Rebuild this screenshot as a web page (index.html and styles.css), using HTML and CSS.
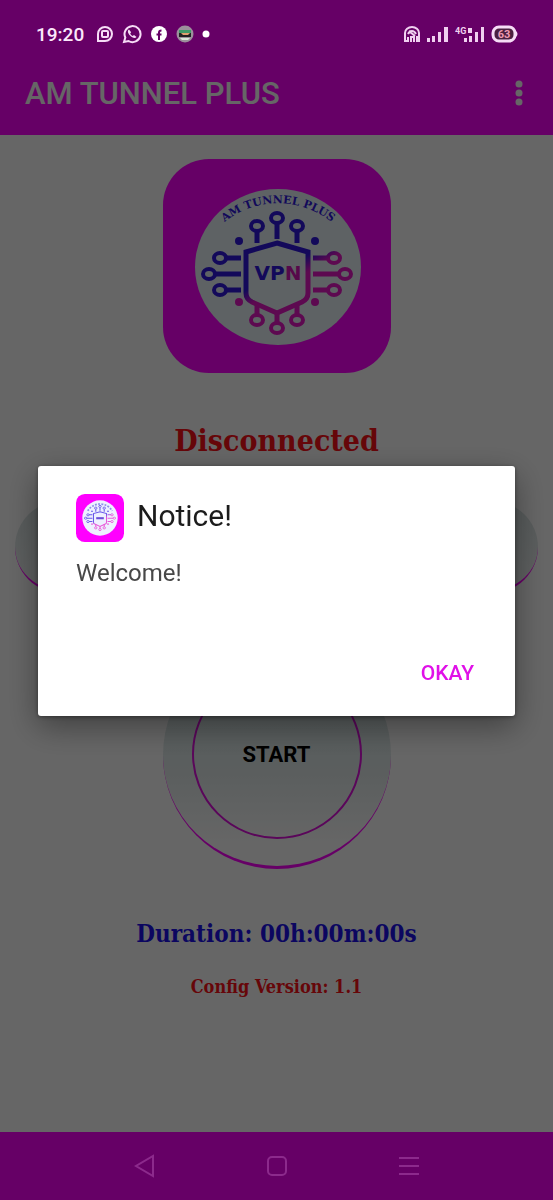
FILE: index.html
```html
<!DOCTYPE html>
<html lang="en">
<head>
  <meta charset="UTF-8">
  <title>AM TUNNEL PLUS</title>
  <meta name="viewport" content="width=device-width, initial-scale=1">
  <link rel="stylesheet" href="styles.css">
</head>
<body>

<!-- Phone status bar -->
<div class="status-bar">
  <span class="time">19:20</span>
  <div class="status-left">
    <svg width="18" height="18" viewBox="0 0 18 18" fill="none" stroke="#f6dcf6" stroke-width="2">
      <path d="M2 16V9a7 7 0 1 1 7 7z"/>
      <rect x="6" y="6" width="6" height="6" rx="1"/>
    </svg>
    <svg width="20" height="20" viewBox="0 0 20 20">
      <path d="M2 18l1.300-4.500A8 8 0 1 1 6.500 17z" fill="none" stroke="#f6dcf6" stroke-width="2"/>
      <path d="M7 5.500c-2 1-1 4 1 6s5 3.500 6.500 1.500l-2.500-2-1.300 1c-1.200-.5-2-1.400-2.500-2.500l1-1.300z" fill="#f6dcf6"/>
    </svg>
    <svg width="18" height="18" viewBox="0 0 18 18">
      <circle cx="9" cy="9" r="8" fill="#fff"/>
      <path d="M9 15V7.500C9 6 10 5.500 11.500 5.500M6.500 9.500h5" fill="none" stroke="#660066" stroke-width="2"/>
    </svg>
    <svg width="18" height="18" viewBox="0 0 18 18">
      <circle cx="9" cy="9" r="8.500" fill="#9c8f9c"/>
      <path d="M3 5h12v3H3z" fill="#3f9a68"/>
      <path d="M3 8h12v4H3z" fill="#222"/>
      <path d="M5 8h9l-2 2H7z" fill="#e0a070"/>
      <path d="M4 13h10l-2 2H6z" fill="#d8e8d8"/>
    </svg>
    <svg width="8" height="18" viewBox="0 0 8 18"><circle cx="4" cy="9" r="3.500" fill="#fff"/></svg>
  </div>
  <div class="status-right">
    <svg width="18" height="18" viewBox="0 0 18 18" fill="none" stroke="#f0d0f0" stroke-width="2">
      <path d="M2 12V8a7 6 0 0 1 14 0v4"/>
      <path d="M5 9c2-4 6-4 8 0M6 6l6 5"/>
      <path d="M2 10v6h3v-4M8 17v-5h3v5M14 17v-5h2v5"/>
    </svg>
    <svg width="22" height="18" viewBox="0 0 22 18" fill="#f0d0f0">
      <path d="M0 13h3v4H0zM5 11h3v6H5zM11 7h3v10h-3zM17 2h4v15h-4z"/>
    </svg>
    <svg width="30" height="18" viewBox="0 0 30 18" fill="#f0d0f0">
      <text x="0" y="9" font-family="Roboto, sans-serif" font-size="9" font-weight="700">4G</text>
      <path d="M9 13h3v4H9zM14 11h3v6h-3zM20 7h3v10h-3zM26 2h3v15h-3zM13 3h4v5h-4z"/>
    </svg>
    <svg width="28" height="18" viewBox="0 0 28 18">
      <rect x="2" y="2" width="22" height="14" rx="6" fill="#4a2040" stroke="#f6dcf6" stroke-width="3"/>
      <path d="M25 6q3 3 0 6z" fill="#f6dcf6"/>
      <text x="13" y="13" text-anchor="middle" font-family="Roboto, sans-serif" font-size="11" font-weight="700" fill="#f09ab0">63</text>
    </svg>
  </div>
</div>

<header>
  <h1>AM TUNNEL PLUS</h1>
  <button class="menu-btn" aria-label="Menu">
    <svg width="12" height="28" viewBox="0 0 12 28" fill="#fff">
      <circle cx="6" cy="4" r="3.500"/><circle cx="6" cy="13" r="3.500"/><circle cx="6" cy="22" r="3.500"/>
    </svg>
  </button>
</header>

<main>
  <svg class="logo" viewBox="0 0 228 214">
    <defs>
      <linearGradient id="ink" gradientUnits="userSpaceOnUse" x1="114" y1="94" x2="138" y2="136">
        <stop offset="0.350" stop-color="#3018e0"/>
        <stop offset="0.650" stop-color="#e818c8"/>
      </linearGradient>
      <path id="arc" d="M55 69A85 85 0 0 1 175 69"/>
      <g id="circuit" fill="none" stroke="url(#ink)" stroke-width="5">
        <path d="M114 84l31 9v41q0 6-6 9l-25 11-25-11q-6-3-6-9V93z"/>
        <path d="M94 84V73M114 80V65M134 84V73M94 144v11M114 154v10M134 144v11"/>
        <path d="M78 99H62M78 115H51M78 131H62M150 99h16M150 115h27M150 131h16"/>
        <g stroke-width="4">
          <ellipse cx="94" cy="67" rx="6" ry="5"/><ellipse cx="114" cy="59" rx="6" ry="5"/><ellipse cx="134" cy="67" rx="6" ry="5"/>
          <ellipse cx="94" cy="161" rx="6" ry="5"/><ellipse cx="114" cy="169" rx="6" ry="5"/><ellipse cx="134" cy="161" rx="6" ry="5"/>
          <ellipse cx="57" cy="99" rx="6" ry="5"/><ellipse cx="46" cy="115" rx="6" ry="5"/><ellipse cx="57" cy="131" rx="6" ry="5"/>
          <ellipse cx="171" cy="99" rx="6" ry="5"/><ellipse cx="182" cy="115" rx="6" ry="5"/><ellipse cx="171" cy="131" rx="6" ry="5"/>
        </g>
        <g stroke="none">
          <circle cx="76" cy="82" r="4" fill="#3018e0"/><circle cx="152" cy="82" r="4" fill="#3018e0"/>
          <circle cx="76" cy="143" r="4" fill="#e818c8"/><circle cx="152" cy="143" r="4" fill="#e818c8"/>
        </g>
      </g>
    </defs>
    <rect width="228" height="214" rx="46" fill="#f0f"/>
    <ellipse cx="115" cy="108" rx="83" ry="78" fill="#eaf6fa"/>
    <text class="logo-name" text-anchor="middle"><textPath href="#arc" startOffset="50%">AM TUNNEL PLUS</textPath></text>
    <use href="#circuit"/>
    <text class="logo-vpn" x="115" y="121" text-anchor="middle">VP<tspan fill="#d818b8">N</tspan></text>
  </svg>

  <p class="state">Disconnected</p>
  <div class="server"></div>
  <button class="start"><span>START</span></button>
  <p class="duration">Duration: 00h:00m:00s</p>
  <p class="version">Config Version: 1.1</p>
</main>

<!-- Notice dialog -->
<div class="overlay">
  <div class="dialog" role="dialog" aria-labelledby="notice">
    <div class="dialog-head">
      <svg width="48" height="48" viewBox="0 0 228 228">
        <rect width="228" height="228" rx="42" fill="#f0f"/>
        <circle cx="114" cy="114" r="84" fill="#eef0ff"/>
        <path d="M56 80A68 68 0 0 1 172 80" fill="none" stroke="#8a90e8" stroke-width="8" stroke-dasharray="9 6"/>
        <use href="#circuit" opacity="0.700"/>
        <path d="M96 115h36" stroke="#6a50d8" stroke-width="10"/>
      </svg>
      <h2 id="notice">Notice!</h2>
    </div>
    <p>Welcome!</p>
    <button class="okay">OKAY</button>
  </div>
</div>

<!-- Phone navigation keys -->
<nav>
  <button aria-label="Back">
    <svg width="24" height="24" viewBox="0 0 24 24"><path d="M20 2v20L3 12z"/></svg>
  </button>
  <button aria-label="Home">
    <svg width="24" height="24" viewBox="0 0 24 24"><rect x="3" y="3" width="18" height="18" rx="4"/></svg>
  </button>
  <button aria-label="Recent apps">
    <svg width="24" height="24" viewBox="0 0 24 24"><path d="M2 4h20M2 12h20M2 20h20"/></svg>
  </button>
</nav>

</body>
</html>
```
FILE: styles.css
```css
* { box-sizing: border-box; }
body {
  margin: 0;
  min-height: 100vh;
  display: flex;
  flex-direction: column;
  background: #fff;
  font-family: Roboto, sans-serif;
}
h1, h2, p { margin: 0; }
button {
  padding: 0;
  border: none;
  background: none;
  font-family: inherit;
  cursor: pointer;
}
svg { display: block; }

/* status bar and nav keys stay above the dimmed page */
.status-bar {
  position: relative;
  z-index: 20;
  height: 54px;
  padding: 14px 34px 0 36px;
  display: flex;
  align-items: center;
  background: #660066;
  color: #fbe8fb;
}
.time {
  width: 60px;
  font-size: 19px;
  font-weight: 500;
}
.status-left {
  display: flex;
  align-items: center;
  gap: 8px;
}
.status-right {
  margin-left: auto;
  display: flex;
  align-items: center;
  gap: 6px;
}

header {
  height: 81px;
  padding: 0 28px 2px 25px;
  display: flex;
  justify-content: space-between;
  align-items: center;
  background: #ff00ff;
  color: white;
}
header h1 {
  font-size: 31px;
  font-weight: 500;
}

main {
  flex: 1;
  padding: 24px 15px;
  display: flex;
  flex-direction: column;
  align-items: center;
}
.logo {
  width: 228px;
  height: 214px;
}
.logo-name {
  font-family: "DejaVu Serif", serif;
  font-size: 11px;
  font-weight: bold;
  fill: #3018e0;
}
.logo-vpn {
  font-family: "DejaVu Sans", sans-serif;
  font-size: 20px;
  font-weight: bold;
  fill: #3018e0;
}
.state, .duration, .version {
  font-family: "DejaVu Serif Condensed", "DejaVu Serif", serif;
  font-weight: bold;
}
.state {
  margin-top: 48px;
  font-size: 30px;
  line-height: 40px;
  color: #ff1018;
}
.server {
  width: 100%;
  height: 92px;
  margin-top: 40px;
  border-bottom: 3px solid #ff00ff;
  border-radius: 46px;
  background: linear-gradient(#d8e2e2, #eef2f2);
}
.start {
  width: 228px;
  height: 228px;
  margin-top: 48px;
  display: flex;
  justify-content: center;
  align-items: center;
  border-bottom: 3px solid #ff00ff;
  border-radius: 50%;
  background: linear-gradient(#d8e6e6 30%, #e4ecec 60%, #fff 90%);
}
.start span {
  width: 170px;
  height: 170px;
  border: 2px solid #e010e0;
  border-radius: 50%;
  font-size: 22px;
  font-weight: bold;
  line-height: 168px;
  color: #000;
}
.duration {
  margin-top: 48px;
  font-size: 24px;
  line-height: 34px;
  color: #2010f0;
}
.version {
  margin-top: 24px;
  font-size: 18px;
  line-height: 24px;
  color: #ff1018;
}

.overlay {
  position: fixed;
  inset: 0;
  z-index: 10;
  padding: 0 38px 18px;
  display: flex;
  align-items: center;
  background: rgba(0,0,0,0.6);
}
.dialog {
  width: 100%;
  padding: 28px 38px;
  border-radius: 3px;
  background: white;
  box-shadow: 0 10px 32px rgba(0,0,0,0.4), 0 1px 4px rgba(0,0,0,0.4);
}
.dialog-head {
  display: flex;
  align-items: center;
  gap: 13px;
}
.dialog h2 {
  padding-bottom: 4px;
  font-size: 30px;
  font-weight: 400;
  line-height: 44px;
  color: #1c1c1c;
}
.dialog p {
  margin-top: 16px;
  font-size: 24px;
  line-height: 30px;
  color: #484848;
}
.okay {
  display: block;
  margin: 70px 3px 0 auto;
  font-size: 21px;
  font-weight: 500;
  line-height: 30px;
  color: #e010e8;
}

nav {
  position: relative;
  z-index: 20;
  height: 68px;
  display: flex;
  justify-content: center;
  align-items: center;
  gap: 108px;
  background: #660066;
}
nav svg {
  fill: none;
  stroke: #8c2a8c;
  stroke-width: 2;
}
```
